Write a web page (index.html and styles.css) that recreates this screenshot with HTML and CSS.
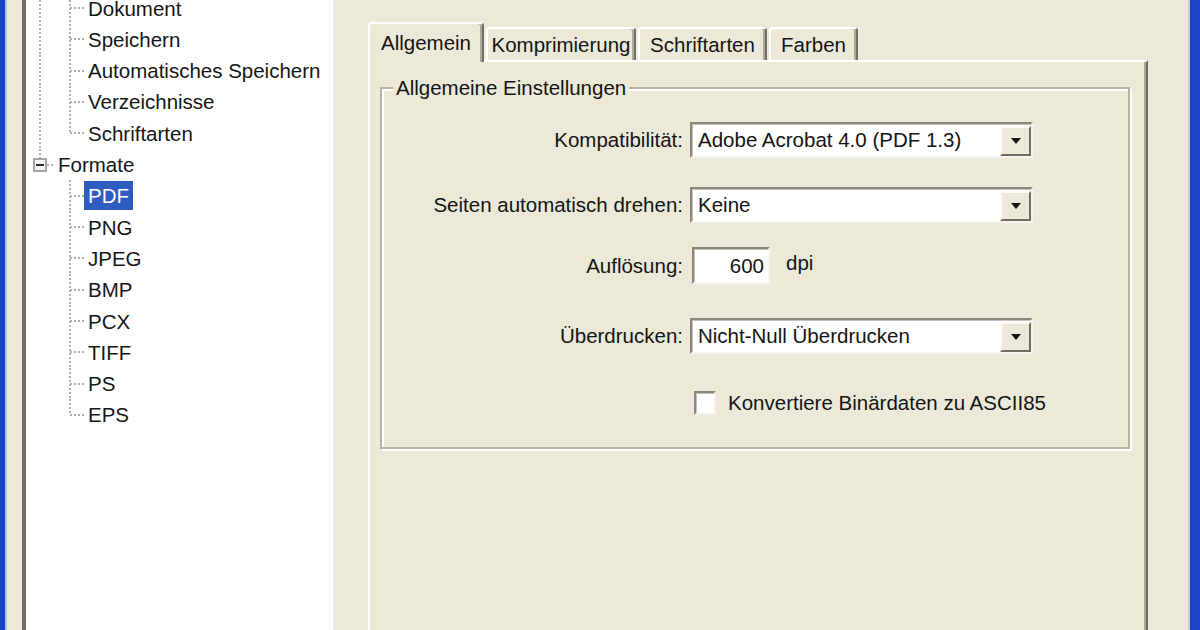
FILE: index.html
```html
<!DOCTYPE html>
<html lang="de">
<head>
<meta charset="utf-8">
<title>Optionen – Formate – PDF</title>
<link rel="stylesheet" href="styles.css">
</head>
<body>
<div class="window">
  <div class="side">
    <div class="tree">
      <ul class="tree-list">
        <li class="node"><span class="cell v"></span><span class="cell t"></span><span class="label">Dokument</span></li>
        <li class="node"><span class="cell v"></span><span class="cell t"></span><span class="label">Speichern</span></li>
        <li class="node"><span class="cell v"></span><span class="cell t"></span><span class="label">Automatisches Speichern</span></li>
        <li class="node"><span class="cell v"></span><span class="cell t"></span><span class="label">Verzeichnisse</span></li>
        <li class="node"><span class="cell v"></span><span class="cell l"></span><span class="label">Schriftarten</span></li>
        <li class="node"><span class="cell root"><span class="expander"></span></span><span class="label">Formate</span></li>
        <li class="node"><span class="cell"></span><span class="cell t"></span><span class="label selected">PDF</span></li>
        <li class="node"><span class="cell"></span><span class="cell t"></span><span class="label">PNG</span></li>
        <li class="node"><span class="cell"></span><span class="cell t"></span><span class="label">JPEG</span></li>
        <li class="node"><span class="cell"></span><span class="cell t"></span><span class="label">BMP</span></li>
        <li class="node"><span class="cell"></span><span class="cell t"></span><span class="label">PCX</span></li>
        <li class="node"><span class="cell"></span><span class="cell t"></span><span class="label">TIFF</span></li>
        <li class="node"><span class="cell"></span><span class="cell t"></span><span class="label">PS</span></li>
        <li class="node"><span class="cell"></span><span class="cell l"></span><span class="label">EPS</span></li>
      </ul>
    </div>
  </div>

  <div class="main">
    <div class="tabs">
      <div class="tab tab-general active">Allgemein</div>
      <div class="tab tab-compress">Komprimierung</div>
      <div class="tab tab-fonts">Schriftarten</div>
      <div class="tab tab-colors">Farben</div>
    </div>
    <div class="panel">
      <fieldset class="group">
        <legend class="group-title">Allgemeine Einstellungen</legend>

        <div class="row row-compat">
          <span class="field-label">Kompatibilität:</span>
          <div class="select">
            <span class="select-value">Adobe Acrobat 4.0 (PDF 1.3)</span>
            <span class="select-button"><span class="arrow"></span></span>
          </div>
        </div>

        <div class="row row-rotate">
          <span class="field-label">Seiten automatisch drehen:</span>
          <div class="select">
            <span class="select-value">Keine</span>
            <span class="select-button"><span class="arrow"></span></span>
          </div>
        </div>

        <div class="row row-res">
          <span class="field-label">Auflösung:</span>
          <div class="input">600</div>
          <span class="unit">dpi</span>
        </div>

        <div class="row row-overprint">
          <span class="field-label">Überdrucken:</span>
          <div class="select">
            <span class="select-value">Nicht-Null Überdrucken</span>
            <span class="select-button"><span class="arrow"></span></span>
          </div>
        </div>

        <div class="row row-check">
          <span class="field-label"></span>
          <span class="checkbox"></span>
          <span class="check-label">Konvertiere Binärdaten zu ASCII85</span>
        </div>
      </fieldset>
    </div>
  </div>
</div>
</body>
</html>
```

FILE: styles.css
```css
* {
  box-sizing: border-box;
}

html, body {
  margin: 0;
  padding: 0;
  background: #ece9d8;
}

body {
  font-family: "Liberation Sans", Arial, sans-serif;
  font-size: 20.5px;
  color: #141414;
}

.window {
  display: flex;
  width: 1200px;
  height: 630px;
  overflow: hidden;
  background: #ece9d8;
  border-left: 5px solid #1a43c6;
  border-right: 10px solid #1a43c6;
  box-shadow: inset 2px 0 0 #b9c4ee, inset -2px 0 0 #c9cff0;
}

/* ---------- left tree ---------- */
.side {
  padding-left: 17px;
  height: 100%;
}

.tree {
  width: 312px;
  height: 100%;
  background: #ffffff;
  border-left: 4px solid #6f6c62;
  border-right: 1px solid #f2f1ea;
  overflow: hidden;
}

.tree-list {
  list-style: none;
  margin: -7.6px 0 0 0;
  padding: 0;
}

.node {
  display: flex;
  align-items: center;
  height: 31.3px;
}

.cell {
  flex: none;
  display: flex;
  align-items: center;
  justify-content: center;
  width: 30px;
  height: 100%;
  background-repeat: no-repeat;
}

.node .cell:first-child {
  width: 28px;
}

/* full vertical guide at the root level */
.cell.v {
  background-image: repeating-linear-gradient(to bottom, #b0b0b0 0 2px, transparent 2px 4px);
  background-size: 2px 100%;
  background-position: 13px 0;
}

/* tee connector at the child level */
.cell.t {
  background-image:
    repeating-linear-gradient(to bottom, #b0b0b0 0 2px, transparent 2px 4px),
    repeating-linear-gradient(to right, #b0b0b0 0 2px, transparent 2px 4px);
  background-size: 2px 100%, 14px 2px;
  background-position: 15px 0, 16px 50%;
}

/* last-child corner connector */
.cell.l {
  background-image:
    repeating-linear-gradient(to bottom, #b0b0b0 0 2px, transparent 2px 4px),
    repeating-linear-gradient(to right, #b0b0b0 0 2px, transparent 2px 4px);
  background-size: 2px 50%, 14px 2px;
  background-position: 15px 0, 16px 50%;
}

/* root node with expander */
.cell.root {
  background-image:
    repeating-linear-gradient(to bottom, #b0b0b0 0 2px, transparent 2px 4px),
    repeating-linear-gradient(to right, #b0b0b0 0 2px, transparent 2px 4px);
  background-size: 2px 50%, 7px 2px;
  background-position: 13px 0, 21px 50%;
}

.expander {
  width: 14px;
  height: 14px;
  border: 2px solid #a3a6a8;
  background: linear-gradient(#2b2b2b, #2b2b2b) center / 8px 2px no-repeat, #f6f6f4;
}

.label {
  padding: 0 4px;
  height: 29px;
  line-height: 29px;
  white-space: nowrap;
  color: #161616;
}

.label.selected {
  background: #2f5cbf;
  color: #ffffff;
}

/* ---------- right side ---------- */
.main {
  flex: 1;
  display: flex;
  flex-direction: column;
  padding: 22px 42px 0 34px;
  height: 100%;
}

.tabs {
  display: flex;
  align-items: flex-end;
  gap: 2px;
  height: 38px;
}

.tab {
  display: flex;
  align-items: center;
  justify-content: center;
  height: 33px;
  padding-top: 1px;
  border-top: 2px solid #ffffff;
  border-left: 2px solid #ffffff;
  border-right: 2px solid #716f64;
  border-radius: 4px 4px 0 0;
  box-shadow: inset -2px 0 0 #aca899;
  background: #ece9d8;
  white-space: nowrap;
}

.tab-general { width: 116px; }
.tab-compress { width: 150px; }
.tab-fonts { width: 129px; }
.tab-colors { width: 89px; }

.tab.active {
  height: 40px;
  margin-bottom: -2px;
  padding-top: 0;
  position: relative;
  z-index: 1;
}

.panel {
  flex: 1;
  border-top: 2px solid #ffffff;
  border-left: 2px solid #ffffff;
  border-right: 2px solid #716f64;
  box-shadow: inset -2px 0 0 #aca899;
  background: #ece9d8;
  padding: 14px 16px 0 10px;
}

.group {
  margin: 0;
  padding: 22px 0 32px 0;
  border: 2px solid #b7b4a4;
  box-shadow: inset 2px 2px 0 #ffffff, 2px 2px 0 #ffffff;
  min-width: 0;
}

.group-title {
  margin-left: 11px;
  padding: 0 3px;
  line-height: 24px;
  background: #ece9d8;
}

.row {
  display: flex;
  align-items: center;
  gap: 7px;
}

.row-rotate { margin-top: 29px; }
.row-res { margin-top: 24px; }
.row-overprint { margin-top: 34px; }
.row-check { margin-top: 37px; }

.field-label {
  flex: none;
  width: 301px;
  text-align: right;
  white-space: nowrap;
}

.select {
  display: flex;
  align-items: stretch;
  width: 343px;
  height: 36px;
  background: #ffffff;
  border: 2px solid;
  border-color: #8a887c #f5f4ee #f5f4ee #8a887c;
  box-shadow: inset 1px 1px 0 #c4c2b5;
}

.select-value {
  flex: 1;
  display: flex;
  align-items: center;
  padding-left: 6px;
  white-space: nowrap;
}

.select-button {
  flex: none;
  display: flex;
  align-items: center;
  justify-content: center;
  width: 31px;
  margin: 2px 0 0 0;
  background: #ece9d8;
  border-top: 2px solid #fbfaf5;
  border-left: 2px solid #fbfaf5;
  border-right: 2px solid #6f6c62;
  border-bottom: 2px solid #6f6c62;
}

.arrow {
  width: 0;
  height: 0;
  border-left: 5px solid transparent;
  border-right: 5px solid transparent;
  border-top: 6px solid #111111;
}

.input {
  width: 78px;
  height: 37px;
  margin-left: 2px;
  background: #ffffff;
  border: 2px solid;
  border-color: #8a887c #f5f4ee #f5f4ee #8a887c;
  box-shadow: inset 1px 1px 0 #c4c2b5;
  text-align: right;
  padding-right: 4px;
  line-height: 33px;
}

.unit {
  align-self: flex-start;
  margin-top: 4px;
  margin-left: 9px;
}

.checkbox {
  flex: none;
  width: 22px;
  height: 24px;
  margin-left: 4px;
  background: #ffffff;
  border: 2px solid;
  border-color: #8a887c #f2f1ea #f2f1ea #8a887c;
  box-shadow: inset 1px 1px 0 #c4c2b5;
}

.check-label {
  margin-left: 5px;
  white-space: nowrap;
}
```
